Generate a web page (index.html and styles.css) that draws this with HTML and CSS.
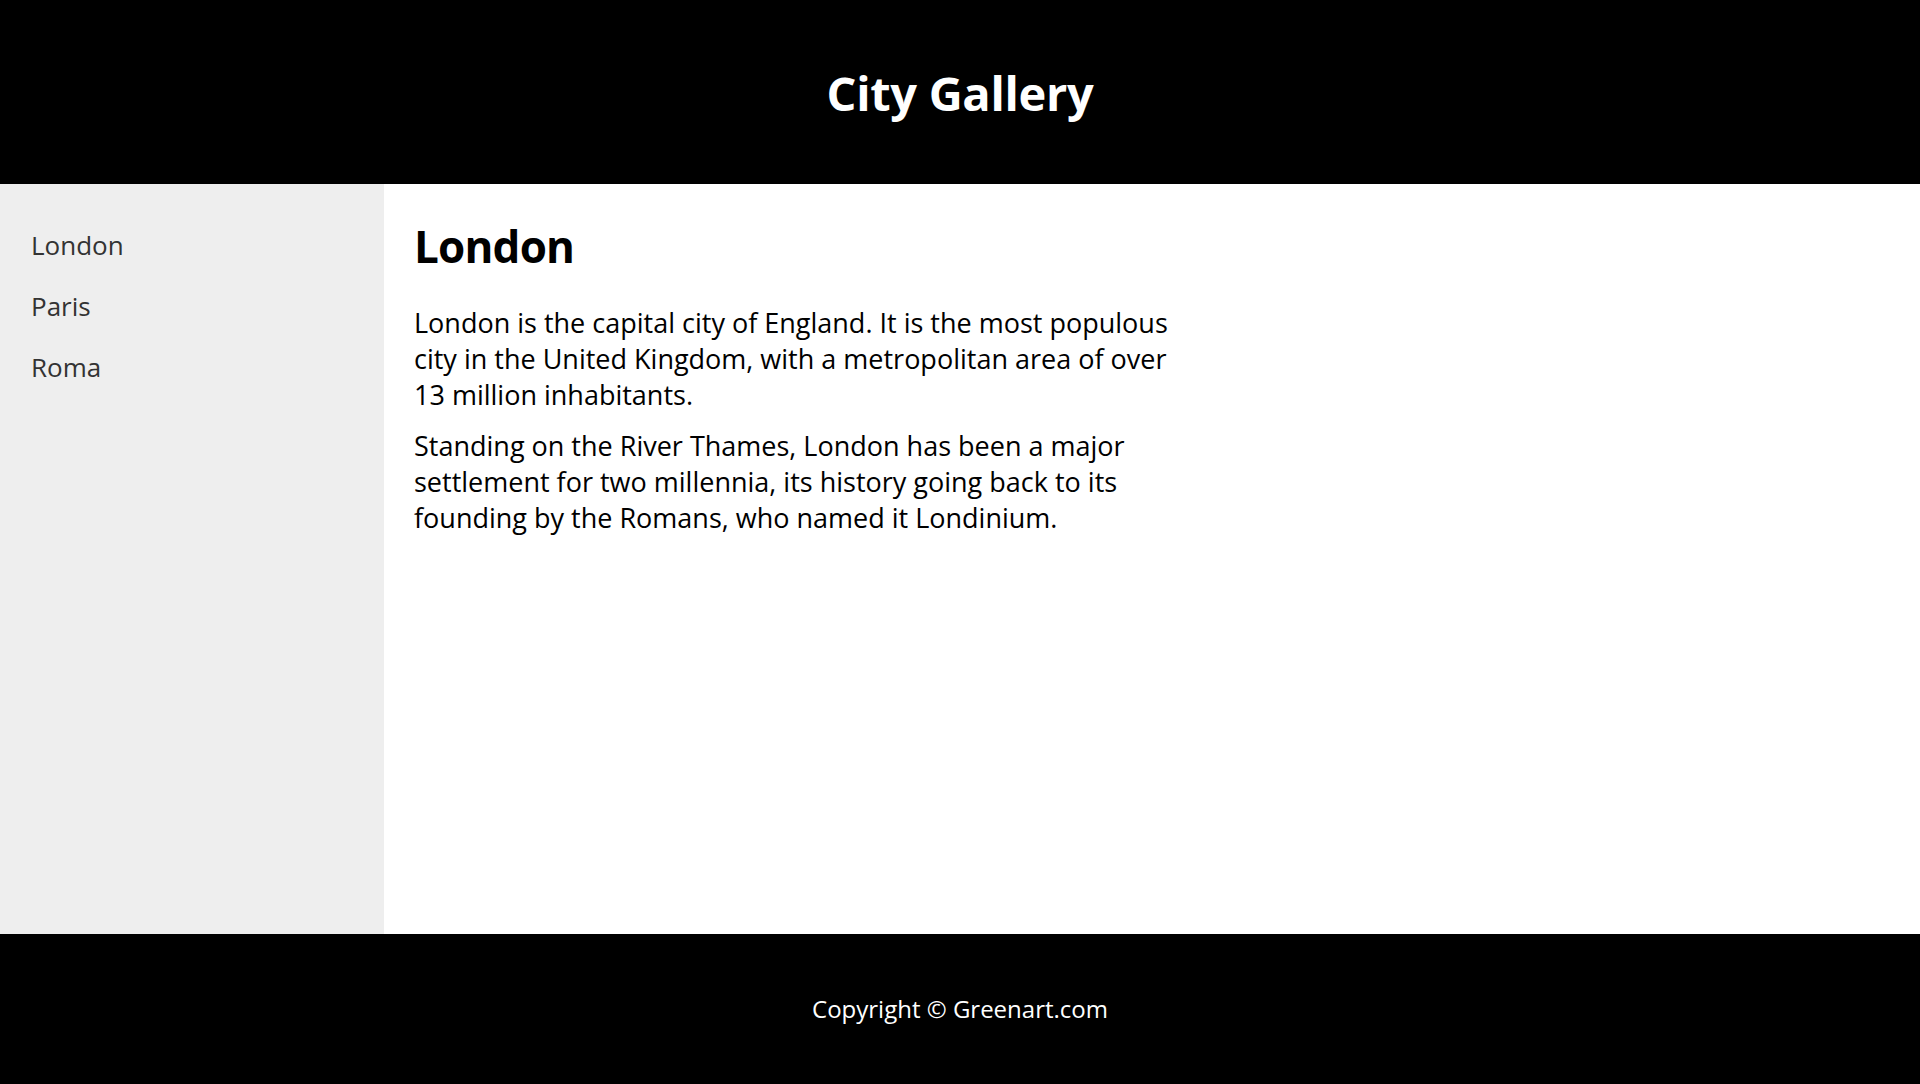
FILE: index.html
```html
<!DOCTYPE html>
<html lang="en">
<head>
<meta charset="utf-8">
<title>City Gallery</title>
<link rel="stylesheet" href="styles.css">
</head>
<body>
<header class="site-header">
  <h1 class="site-title">City Gallery</h1>
</header>
<div class="layout">
  <nav class="sidebar">
    <ul class="city-list">
      <li><a class="city-link" href="#">London</a></li>
      <li><a class="city-link" href="#">Paris</a></li>
      <li><a class="city-link" href="#">Roma</a></li>
    </ul>
  </nav>
  <main class="content">
    <h2 class="city-title">London</h2>
    <p class="city-text">London is the capital city of England. It is the most populous city in the United Kingdom, with a metropolitan area of over 13 million inhabitants.</p>
    <p class="city-text">Standing on the River Thames, London has been a major settlement for two millennia, its history going back to its founding by the Romans, who named it Londinium.</p>
  </main>
</div>
<footer class="site-footer">
  <p class="copyright">Copyright © Greenart.com</p>
</footer>
</body>
</html>
```

FILE: styles.css
```css
html, body {
  margin: 0;
  padding: 0;
}
body {
  font-family: "Open Sans", "Noto Sans", "Noto Sans CJK KR", sans-serif;
  color: #000;
  background: #fff;
  height: 1084px;
  display: flex;
  flex-direction: column;
}
.site-header {
  height: 184px;
  flex: none;
  box-sizing: border-box;
  padding-top: 3px;
  background: #000;
  color: #fff;
  display: flex;
  align-items: center;
  justify-content: center;
}
.site-title {
  margin: 0;
  font-size: 47px;
  font-weight: 700;
  letter-spacing: -0.3px;
  line-height: 1;
}
.layout {
  flex: 1;
  display: flex;
}
.sidebar {
  width: 384px;
  flex: none;
  background: #eee;
  box-sizing: border-box;
  padding: 43px 0 0 31px;
}
.city-list {
  list-style: none;
  margin: 0;
  padding: 0;
  display: flex;
  flex-direction: column;
}
.city-list li {
  height: 61px;
  line-height: 36px;
}
.city-link {
  color: #333;
  text-decoration: none;
  font-size: 26px;
}
.content {
  flex: 1;
  padding: 36px 0 0 30px;
}
.city-title {
  margin: 0 0 33px;
  font-size: 44px;
  font-weight: 700;
  letter-spacing: -0.8px;
  line-height: 52px;
}
.city-text {
  margin: 0 0 15px;
  max-width: 765px;
  font-size: 27px;
  line-height: 36px;
}
.site-footer {
  height: 150px;
  flex: none;
  background: #000;
  color: #fff;
  display: flex;
  align-items: center;
  justify-content: center;
}
.copyright {
  margin: 0;
  font-size: 24px;
  line-height: 1;
}
```
